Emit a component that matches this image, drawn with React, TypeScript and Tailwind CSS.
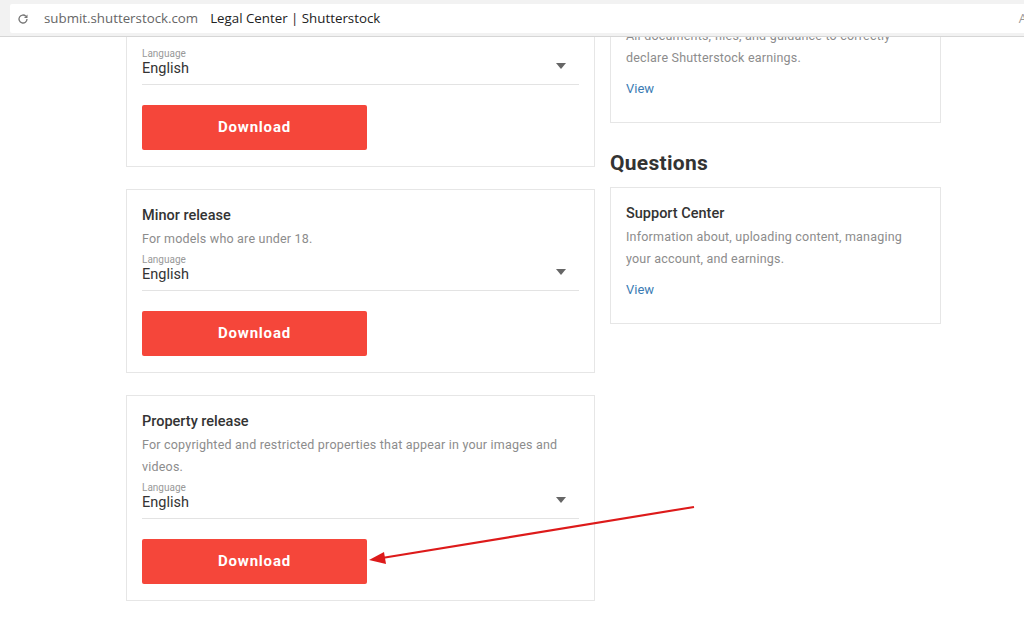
import React from "react";

interface Release {
  title: string;
  desc: string;
}

interface InfoCard {
  title: string;
  desc: string;
}

const releases: Release[] = [
  { title: "Model release", desc: "For adult models who are 18 and older." },
  { title: "Minor release", desc: "For models who are under 18." },
  {
    title: "Property release",
    desc: "For copyrighted and restricted properties that appear in your images and videos.",
  },
];

function ReleaseCard({ release }: { release: Release }) {
  return (
    <div className="border border-[#e6e6e6] bg-white px-[15px] pt-4 pb-4">
      <h3 className="text-[14.5px] leading-5 font-medium text-[#333]">
        {release.title}
      </h3>
      <p className="mt-[2px] text-[12.5px] leading-[22px] text-[#8c8c8c] tracking-[0.2px]">
        {release.desc}
      </p>
      <div className="mt-1 border-b border-[#e3e3e3] pb-[6px] flex items-end justify-between">
        <div>
          <div className="text-[10px] leading-3 text-[#999]">Language</div>
          <div className="text-[14.5px] leading-[18px] text-[#333]">English</div>
        </div>
        <svg width="10" height="6" viewBox="0 0 10 6" className="mb-[9px] mr-[13px]">
          <path d="M0 0 L10 0 L5 6 Z" fill="#666" />
        </svg>
      </div>
      <button className="mt-[20px] w-[225px] h-[45px] bg-[#f5463a] rounded-[2px] text-white text-[15px] font-bold tracking-[0.8px]">
        Download
      </button>
    </div>
  );
}

function SideCard({ card }: { card: InfoCard }) {
  return (
    <div className="border border-[#e6e6e6] bg-white px-[15px] pt-4 pb-[22px]">
      <h3 className="text-[14.5px] leading-5 font-medium text-[#333]">
        {card.title}
      </h3>
      <p className="mt-[2px] text-[12.5px] leading-[22px] text-[#8c8c8c] tracking-[0.2px]">
        {card.desc}
      </p>
      <a className="block mt-[9px] text-[13px] leading-[22px] text-[#3b7cb4]">View</a>
    </div>
  );
}

export default function App() {
  return (
    <div
      className="relative w-[1024px] h-[644px] overflow-hidden bg-white flex flex-col"
      style={{ fontFamily: "Roboto, 'Liberation Sans', sans-serif" }}
    >
      {/* Browser address bar */}
      <div className="h-[37px] shrink-0 bg-[#f2f2f2] border-b border-[#d6d6d6] pt-[4px] pl-[10px] z-10">
        <div
          className="h-[29px] bg-white rounded-l-[2px] flex items-center pl-[7px] text-[13.3px]"
          style={{ fontFamily: "'Open Sans', 'Liberation Sans', sans-serif" }}
        >
          <svg width="12" height="12" viewBox="0 0 24 24" className="text-[#777]">
            <path
              d="M20 12a8 8 0 1 1-2.34-5.66"
              fill="none"
              stroke="currentColor"
              strokeWidth="2.6"
            />
            <path d="M21 3v7h-7z" fill="currentColor" />
          </svg>
          <span className="ml-[15px] text-[#666]">submit.shutterstock.com</span>
          <span className="ml-[12px] text-[#222]">Legal Center | Shutterstock</span>
          <span className="ml-auto mr-[-3px] text-[#999] text-[13px]">A</span>
        </div>
      </div>

      {/* Page content, scrolled */}
      <div className="flex-1 overflow-hidden">
        <div className="-mt-[54px] ml-[126px] flex items-start gap-[15px]">
          <div className="w-[469px] flex flex-col gap-[22px]">
            {releases.map((r) => (
              <ReleaseCard key={r.title} release={r} />
            ))}
          </div>

          <div className="w-[331px] pt-[3px]">
            <SideCard
              card={{
                title: "Tax information",
                desc: "All documents, files, and guidance to correctly declare Shutterstock earnings.",
              }}
            />
            <h2 className="mt-[26px] mb-[10px] text-[21px] leading-7 font-bold tracking-[0.3px] text-[#333]">
              Questions
            </h2>
            <SideCard
              card={{
                title: "Support Center",
                desc: "Information about, uploading content, managing your account, and earnings.",
              }}
            />
          </div>
        </div>
      </div>

      {/* Annotation arrow */}
      <svg
        className="absolute left-0 top-0 pointer-events-none"
        width="1024"
        height="644"
      >
        <line x1="694" y1="507" x2="382" y2="558" stroke="#dd1a1a" strokeWidth="2.2" />
        <path d="M369 560 L384 552 L386 564 Z" fill="#dd1a1a" />
      </svg>
    </div>
  );
}
